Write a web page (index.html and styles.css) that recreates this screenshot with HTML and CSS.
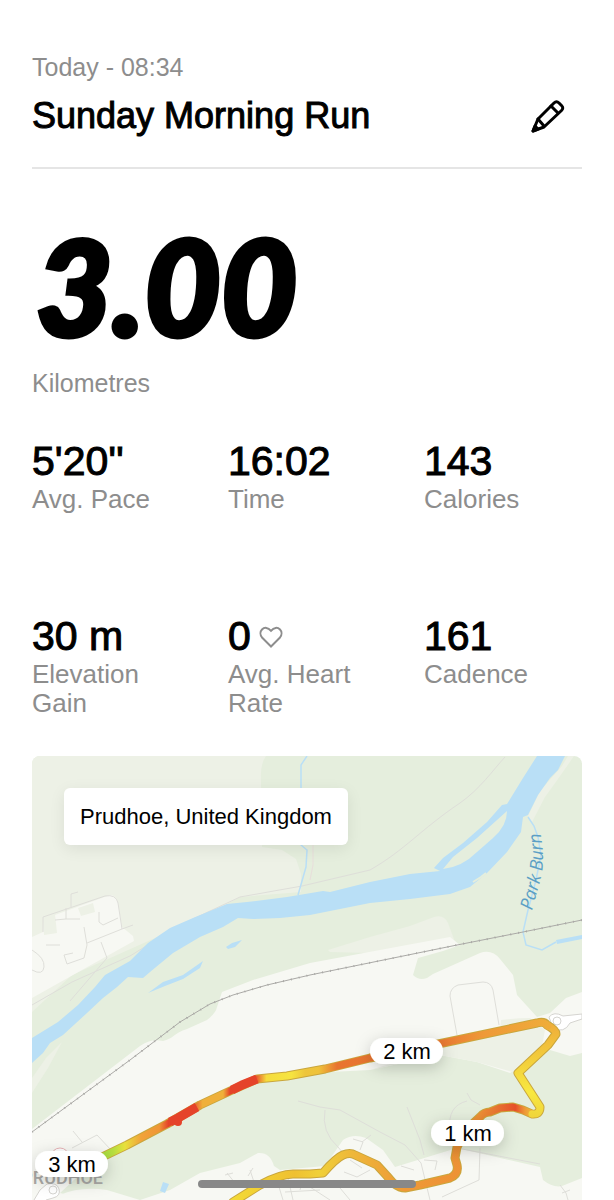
FILE: index.html
```html
<!DOCTYPE html>
<html lang="en-GB">
<head>
<meta charset="utf-8">
<meta name="viewport" content="width=device-width, initial-scale=1">
<title>Sunday Morning Run</title>
<link rel="stylesheet" href="styles.css">
</head>
<body>
<main class="run">
  <header class="run-header">
    <div class="run-heading">
      <p class="run-date">Today - 08:34</p>
      <h1 class="run-title">Sunday Morning Run</h1>
    </div>
    <button class="edit-button" type="button" aria-label="Edit run">
      <svg class="edit-icon" viewBox="0 0 36 36" fill="none" stroke="#000" stroke-width="3" stroke-linejoin="round" stroke-linecap="round" aria-hidden="true">
        <path d="M3 33 8 21 24 5Q26.500 2.500 29 5L31.500 7.500Q34 10 31.500 12.500L14 29Z"/>
        <path d="M21 8 28 15M8 21 14 28"/>
        <path d="M3 33 5 28 8 31Z" fill="#000"/>
      </svg>
    </button>
  </header>

  <section class="distance">
    <p class="distance-value">3.00</p>
    <p class="distance-unit">Kilometres</p>
  </section>

  <dl class="stats">
    <div class="stat"><dt class="stat-label">Avg. Pace</dt><dd class="stat-value">5'20''</dd></div>
    <div class="stat"><dt class="stat-label">Time</dt><dd class="stat-value">16:02</dd></div>
    <div class="stat"><dt class="stat-label">Calories</dt><dd class="stat-value">143</dd></div>
    <div class="stat"><dt class="stat-label">Elevation Gain</dt><dd class="stat-value">30 m</dd></div>
    <div class="stat"><dt class="stat-label">Avg. Heart Rate</dt><dd class="stat-value">0
      <svg class="heart-icon" viewBox="0 0 24 22" fill="none" stroke="#8d8d8d" stroke-width="2" stroke-linejoin="miter" aria-hidden="true"><path d="M12 20.500 3 11.500C1 9 1 5.500 3 3.500 5.500 1 9 1.300 12 4.800 15 1.300 18.500 1 21 3.500 23 5.500 23 9 21 11.500Z"/></svg></dd></div>
    <div class="stat"><dt class="stat-label">Cadence</dt><dd class="stat-value">161</dd></div>
  </dl>

  <section class="map" aria-label="Route map">
    <svg class="map-canvas" viewBox="32 756 550 444" preserveAspectRatio="xMidYMin slice" role="img" aria-label="Route near Prudhoe">
      <defs>
        <linearGradient id="leg-a" gradientUnits="userSpaceOnUse" x1="100" y1="0" x2="556" y2="0">
          <stop offset="0" stop-color="#a4dc3e"/><stop offset=".03" stop-color="#b8df40"/><stop offset=".055" stop-color="#e8e03c"/>
          <stop offset=".09" stop-color="#f1a33a"/><stop offset=".13" stop-color="#ef9636"/><stop offset=".15" stop-color="#e5432a"/>
          <stop offset=".2" stop-color="#e5432a"/><stop offset=".225" stop-color="#efb03a"/><stop offset=".27" stop-color="#efb03a"/>
          <stop offset=".285" stop-color="#e5432a"/><stop offset=".34" stop-color="#e6482a"/><stop offset=".365" stop-color="#f5dc3c"/>
          <stop offset=".42" stop-color="#f6e440"/><stop offset=".45" stop-color="#edc53c"/><stop offset=".48" stop-color="#efc23a"/>
          <stop offset=".52" stop-color="#e87430"/><stop offset=".75" stop-color="#e97932"/><stop offset=".84" stop-color="#ee9938"/><stop offset="1" stop-color="#efae3a"/>
        </linearGradient>
        <linearGradient id="leg-b" gradientUnits="userSpaceOnUse" x1="0" y1="1024" x2="0" y2="1115">
          <stop offset="0" stop-color="#efae3a"/><stop offset=".45" stop-color="#f3d23c"/><stop offset=".75" stop-color="#f8e840"/><stop offset="1" stop-color="#f0d63c"/>
        </linearGradient>
        <linearGradient id="leg-c" gradientUnits="userSpaceOnUse" x1="233" y1="0" x2="540" y2="0">
          <stop offset="0" stop-color="#f3da36"/><stop offset=".2" stop-color="#efc030"/><stop offset=".28" stop-color="#f0d038"/><stop offset=".38" stop-color="#eeb93a"/>
          <stop offset=".56" stop-color="#ee9937"/><stop offset=".8" stop-color="#ed9035"/><stop offset=".85" stop-color="#e77832"/>
          <stop offset=".92" stop-color="#e6502a"/><stop offset=".95" stop-color="#ee9837"/><stop offset="1" stop-color="#f1da3c"/>
        </linearGradient>
        <filter id="pin-shadow" x="-50%" y="-80%" width="200%" height="300%"><feDropShadow dx="0" dy="4" stdDeviation="8" flood-color="#000" flood-opacity=".2"/></filter>
        <path id="burn-label" d="M532 911C536 893 543 877 543 860S541 840 540 826"/>
      </defs>

      <rect x="32" y="756" width="550" height="444" fill="#e5eedd"/>
      <path class="meadow" d="M32 756H266Q260 764 261 782L262 847 282 850 296 859 301 874V892L240 897 200 918 72 975 32 1012Z"/>
      <path class="meadow" d="M328 950 370 937 410 926 434 917Q444 914 448 923L455 942 370 953 330 952Z"/>
      <path class="meadow" d="M574 756 558 779 545 797 532 822 528 816 540 791 562 766 568 756Z"/>
      <path class="meadow" d="M32 1078 46 1058 62 1042 48 1068 32 1093Z"/>
      <path class="town" d="M32 937 43 932 44 919 110 895Q116 895 118 903L122 927 133 936 134 941 73 975 32 998Z"/>
      <path fill="#edf1e6" d="M43 919 55 914 57 933 44 935ZM78 908 93 903 95 912 81 916Z"/>
      <path class="town" d="M32 1129 140 1046Q151 1038 163 1041C173 1039 174 1033 187 1029L207 1020Q216 1013 217 1007L222 992 253 980 310 963 450 937 460 945 443 951 418 958 413 975Q419 981 427 978L433 974 480 953Q492 949 500 959L513 975 517 995 537 1017 550 1013 566 998 582 992V1053L570 1056 550 1050 540 1054 510 1073 477 1062 440 1055 370 1070 310 1073 257 1080 178 1122 103 1159 90 1165 60 1193 88 1200H32Z"/>
      <path class="meadow" d="M370 1070 443 1048 500 1033 501 1020Q516 1018 530 1018L545 1030 541 1052 520 1074 477 1062 440 1055Z"/>
      <path class="town" d="M60 1195Q80 1186 107 1190L140 1200 170 1190 200 1173 240 1163 258 1153Q270 1152 274 1166L280 1170 325 1166 343 1140Q353 1133 366 1138L383 1150 395 1167 457 1148 540 1167 543 1180Q553 1188 562 1186L582 1178V1200H60Z"/>

      <g class="road">
        <path d="M32 1005 72 982 130 956 180 925 240 897 302 886 370 870C405 850 420 830 460 803 480 789 493 770 505 757"/>
        <path d="M70 1001 107 958 101 942M43 932V917L105 896Q116 894 118 903L122 929 87 943M46 945H60M55 920 66 919V908M66 919H80M99 912V922L103 925 118 918M84 927 87 945 84 958 67 964 64 955 73 953M71 907V894L78 892M32 950Q45 958 44 967T32 970M122 929 133 925"/>
        <path d="M457 1035 450 996Q450 988 458 985L483 982Q491 982 493 990L499 1025"/>
        <path d="M73 1131 82 1142M72 1148 97 1135 111 1150 100 1157M298 1101 320 1107 340 1110 380 1132 405 1145 421 1163 430 1200M325 1110Q321 1132 338 1147L343 1153M407 1107 420 1140 424 1155M450 1130Q447 1106 467 1101M467 1093 471 1100 480 1105"/>
        <path d="M310 1187 330 1200M335 1182 350 1200M344 1172 357 1177 370 1170M350 1160 362 1168M353 1139 363 1142 360 1150M362 1142 371 1135M424 1160 437 1161 435 1170M401 1166 414 1170M442 1197 468 1185 479 1180 480 1148M457 1148 540 1164M560 1185 566 1193 568 1200M562 1193 570 1190M227 1173 235 1183M225 1175 233 1173M250 1170 254 1182M248 1176 253 1168M279 1187 283 1200M288 1178 293 1200M285 1192 320 1190M303 1180 300 1190"/>
      </g>
      <g fill="#fff" stroke="#d5d4d0" stroke-width="1"><path d="M549 1017Q554 1011 563 1016L582 1014V1019L570 1023Q564 1034 553 1028Z"/><circle cx="557" cy="1021" r="4"/><path d="M34 1200 40 1190 47 1184Q57 1182 59 1189T53 1198L46 1200"/><circle cx="53" cy="1190" r="4"/></g>

      <path fill="#b9dff6" fill-rule="evenodd" d="M32 1038 58 1022 78 1005 95 987 105 975 130 961 148 943 170 928 193 918 227 904 247 902 287 897 323 891 330 892 370 882 410 874 440 871 434 868 443 858 463 843 487 822 502 805 507 804 523 778 537 756H565L558 770 550 778 538 795 528 815 523 817 521 832 507 852 487 873 470 887 450 894 410 899 370 903 310 915 280 918 253 919 238 918 223 927 200 937 173 953 150 972 143 978 128 977 117 987 103 998 87 1013 63 1035 50 1043 43 1053 32 1063ZM507 811 497 820 477 838 453 857 443 869Q462 867 477 852L493 838Q507 826 507 811Z"/>
      <path fill="#b9dff6" d="M148 993 163 982 183 975 203 961 200 968 183 979 165 986ZM226 947 232 943 242 940 235 947 228 949ZM160 1191 163 1182 169 1184 165 1193ZM556 940 582 935V939L557 944Z"/>
      <path fill="none" stroke="#e5eedd" stroke-width="2" d="M473 882 481 877 486 873"/>
      <path fill="none" stroke="#b9dff6" stroke-width="1.500" d="M307 756 301 765V845L307 850 306 867 298 895M528 817 534 826 538 837 541 855 536 880 528 910 523 932 526 945 542 950 556 942"/>
      <path fill="none" stroke="#e8dedb" stroke-width="1" d="M313 845V865L310 880"/>
      <path fill="none" stroke="#aaa9a6" stroke-width="1" d="M32 1132 130 1060 180 1022 210 1004 233 995 267 985 310 975 457 945 523 932 582 920"/>
      <path fill="none" stroke="#aaa9a6" stroke-width="2" stroke-dasharray="1 7" d="M32 1132 130 1060 180 1022 210 1004 233 995 267 985 310 975 457 945 523 932 582 920"/>

      <text class="water-label"><textPath href="#burn-label">Park Burn</textPath></text>
      <circle cx="60" cy="1157" r="9" fill="#fff" stroke="#e7b3b5"/>
      <text class="town-label" x="103" y="1184">PRUDHOE</text>

      <g class="route-edge">
        <path d="M233 1202 260 1185Q280 1174 293 1174H310L323 1173Q336 1158 343 1155T355 1155L377 1165 387 1176 393 1183Q400 1188 405 1188L420 1185 450 1178Q459 1174 457 1165L455 1158 457 1147 466 1130 480 1117Q484 1112 490 1112L500 1108 513 1107 523 1110 532 1114Q540 1115 540 1107L518 1073 548 1045 556 1034Q556 1030 547 1025 544 1021 537 1023L443 1043 370 1058 325 1069 287 1076 257 1079 230 1091 200 1105 167 1124 127 1145 100 1158"/>
      </g>
      <g class="route-line">
        <path stroke="url(#leg-c)" d="M233 1202 260 1185Q280 1174 293 1174H310L323 1173Q336 1158 343 1155T355 1155L377 1165 387 1176 393 1183Q400 1188 405 1188L420 1185 450 1178Q459 1174 457 1165L455 1158 457 1147 466 1130 480 1117Q484 1112 490 1112L500 1108 513 1107 523 1110 532 1114"/>
        <path stroke="url(#leg-b)" d="M532 1114Q540 1115 540 1107L518 1073 548 1045 556 1034Q556 1030 547 1025"/>
        <path stroke="url(#leg-a)" d="M548 1026Q544 1021 537 1023L443 1043 370 1058 325 1069 287 1076 257 1079 230 1091 200 1105 167 1124 127 1145 100 1158"/>
      </g>
      <path d="M170 1122 178 1118 197 1107M232 1090 242 1085 257 1079" fill="none" stroke="#e5432a" stroke-width="9" stroke-linejoin="round"/>
      <circle cx="178" cy="1122" r="4" fill="#e5432a"/>

      <g class="pin"><rect x="370" y="1038" width="73" height="26" rx="13"/><text x="407" y="1059">2 km</text></g>
      <g class="pin"><rect x="431" y="1120" width="73" height="26" rx="13"/><text x="468" y="1141">1 km</text></g>
      <g class="pin"><rect x="35" y="1151" width="73" height="26" rx="13"/><text x="72" y="1172">3 km</text></g>
    </svg>
    <p class="place">Prudhoe, United Kingdom</p>
  </section>
</main>
<div class="home-indicator"></div>
</body>
</html>
```
FILE: styles.css
```css
* { box-sizing: border-box; }

body {
  margin: 0;
  background: #fff;
  color: #000;
  font-family: "Liberation Sans", Arial, sans-serif;
}

p, h1, dl, dd { margin: 0; }

.run {
  display: flex;
  flex-direction: column;
  min-height: 100vh;
  padding: 52px 32px 0;
}

.run-header {
  display: flex;
  align-items: flex-end;
  justify-content: space-between;
  padding-bottom: 31px;
  border-bottom: 2px solid #e5e5e5;
}

.run-date,
.distance-unit {
  color: #8d8d8d;
  font-size: 25px;
  line-height: 30px;
}

.run-title {
  margin-top: 14px;
  font-size: 36px;
  font-weight: 400;
  line-height: 40px;
  -webkit-text-stroke: 1px #000;
}

.edit-button {
  display: flex;
  margin: 0 16px 2px 0;
  padding: 0;
  border: 0;
  background: none;
  cursor: pointer;
}

.edit-icon {
  width: 36px;
  height: 36px;
}

.distance { padding-top: 56px; }

.distance-value {
  padding-left: 4px;
  font-family: Lato, sans-serif;
  font-size: 132px;
  font-style: italic;
  font-weight: 900;
  line-height: 120px;
  -webkit-text-stroke: 5px #000;
}

.distance-unit { margin-top: 23px; }

.stats {
  display: grid;
  grid-template-columns: repeat(3, 1fr);
  column-gap: 38px;
  row-gap: 99px;
  padding: 40px 0 38px;
}

.stat {
  display: flex;
  flex-direction: column-reverse;
  justify-content: flex-end;
}

.stat-value {
  display: flex;
  align-items: center;
  gap: 8px;
  font-size: 41px;
  line-height: 47px;
  -webkit-text-stroke: 1px #000;
}

.stat-label {
  color: #8d8d8d;
  font-size: 26px;
  line-height: 29px;
}

.heart-icon {
  width: 24px;
  height: 22px;
}

.map {
  position: relative;
  display: flex;
  flex: 1;
  overflow: hidden;
  min-height: 440px;
  border-radius: 8px 8px 0 0;
}

.map-canvas {
  position: absolute;
  inset: 0;
  width: 100%;
  height: 100%;
}

.place {
  position: relative;
  align-self: flex-start;
  margin: 32px;
  padding: 14px 16px;
  border-radius: 6px;
  background: #fff;
  box-shadow: 0 4px 16px rgba(0, 0, 0, 0.08);
  font-size: 22px;
  line-height: 29px;
}

.meadow { fill: #edf1e6; }
.town { fill: #f7f8f3; }

.road {
  fill: none;
  stroke: #deded9;
  stroke-width: 1px;
}

.water-label {
  fill: #5b9fc5;
  font-family: "Open Sans", sans-serif;
  font-size: 18px;
  font-style: italic;
}

.town-label {
  fill: #aaa9a6;
  font-family: Roboto, sans-serif;
  font-size: 18px;
  font-weight: 500;
  text-anchor: end;
}

.route-edge,
.route-line {
  fill: none;
  stroke-linecap: round;
  stroke-linejoin: round;
}

.route-edge {
  stroke: #c9a63c;
  stroke-width: 9px;
}

.route-line { stroke-width: 7px; }

.pin rect {
  fill: #fff;
  filter: url(#pin-shadow);
}

.pin text {
  font-size: 22px;
  text-anchor: middle;
}

.home-indicator {
  position: fixed;
  bottom: 12px;
  left: 50%;
  width: 218px;
  height: 8px;
  margin-left: -109px;
  border-radius: 4px;
  background: #888;
}
```
